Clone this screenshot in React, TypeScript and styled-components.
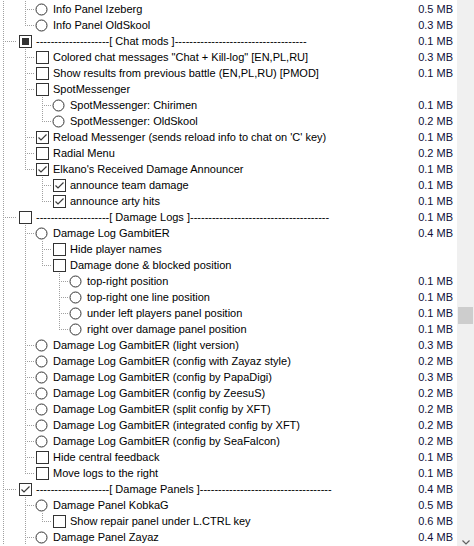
import React from "react";
import styled, { createGlobalStyle } from "styled-components";

type Kind = "radio" | "check";
type State = "on" | "off" | "mixed";

type Item = {
  label: string;
  level: number;
  kind: Kind;
  state?: State;
  size?: string;
};

type GuideKind = "none" | "pipe" | "tee" | "elbow";

const DASHES = (n: number) => "-".repeat(n);

const items: Item[] = [
  { label: "Info Panel Izeberg", level: 1, kind: "radio", size: "0.5 MB" },
  { label: "Info Panel OldSkool", level: 1, kind: "radio", size: "0.3 MB" },
  { label: `${DASHES(20)}[ Chat mods  ]${DASHES(36)}`, level: 0, kind: "check", state: "mixed", size: "0.1 MB" },
  { label: 'Colored chat messages "Chat + Kill-log" [EN,PL,RU]', level: 1, kind: "check", size: "0.3 MB" },
  { label: "Show results from previous battle (EN,PL,RU) [PMOD]", level: 1, kind: "check", size: "0.1 MB" },
  { label: "SpotMessenger", level: 1, kind: "check" },
  { label: "SpotMessenger: Chirimen", level: 2, kind: "radio", size: "0.1 MB" },
  { label: "SpotMessenger: OldSkool", level: 2, kind: "radio", size: "0.2 MB" },
  { label: "Reload Messenger (sends reload info to chat on 'C' key)", level: 1, kind: "check", state: "on", size: "0.1 MB" },
  { label: "Radial Menu", level: 1, kind: "check", size: "0.2 MB" },
  { label: "Elkano's Received Damage Announcer", level: 1, kind: "check", state: "on", size: "0.1 MB" },
  { label: "announce team damage", level: 2, kind: "check", state: "on", size: "0.1 MB" },
  { label: "announce arty hits", level: 2, kind: "check", state: "on", size: "0.1 MB" },
  { label: `${DASHES(20)}[ Damage Logs ]${DASHES(38)}`, level: 0, kind: "check", size: "0.1 MB" },
  { label: "Damage Log GambitER", level: 1, kind: "radio", size: "0.4 MB" },
  { label: "Hide player names", level: 2, kind: "check" },
  { label: "Damage done & blocked position", level: 2, kind: "check" },
  { label: "top-right position", level: 3, kind: "radio", size: "0.1 MB" },
  { label: "top-right one line position", level: 3, kind: "radio", size: "0.1 MB" },
  { label: "under left players panel position", level: 3, kind: "radio", size: "0.1 MB" },
  { label: "right over damage panel position", level: 3, kind: "radio", size: "0.1 MB" },
  { label: "Damage Log GambitER (light version)", level: 1, kind: "radio", size: "0.3 MB" },
  { label: "Damage Log GambitER (config with Zayaz style)", level: 1, kind: "radio", size: "0.2 MB" },
  { label: "Damage Log GambitER (config by PapaDigi)", level: 1, kind: "radio", size: "0.3 MB" },
  { label: "Damage Log GambitER (config by ZeesuS)", level: 1, kind: "radio", size: "0.2 MB" },
  { label: "Damage Log GambitER (split config by XFT)", level: 1, kind: "radio", size: "0.2 MB" },
  { label: "Damage Log GambitER (integrated config by XFT)", level: 1, kind: "radio", size: "0.2 MB" },
  { label: "Damage Log GambitER (config by SeaFalcon)", level: 1, kind: "radio", size: "0.2 MB" },
  { label: "Hide central feedback", level: 1, kind: "check", size: "0.1 MB" },
  { label: "Move logs to the right", level: 1, kind: "check", size: "0.1 MB" },
  { label: `${DASHES(20)}[ Damage Panels ]${DASHES(36)}`, level: 0, kind: "check", state: "on", size: "0.4 MB" },
  { label: "Damage Panel KobkaG", level: 1, kind: "radio", size: "0.5 MB" },
  { label: "Show repair panel under L.CTRL key", level: 2, kind: "check", size: "0.6 MB" },
  { label: "Damage Panel Zayaz", level: 1, kind: "radio", size: "0.4 MB" },
];

// does a sibling at `level` follow row i (the list goes on past the view, so the end counts as yes)
const continues = (i: number, level: number) => {
  for (let j = i + 1; j < items.length; j++) {
    if (items[j].level < level) return false;
    if (items[j].level === level) return true;
  }
  return true;
};

const guidesFor = (i: number): GuideKind[] => {
  const { level } = items[i];
  const out: GuideKind[] = [];
  for (let k = 0; k <= level; k++) {
    const more = continues(i, k);
    if (k === level) out.push(more ? "tee" : "elbow");
    else out.push(more ? "pipe" : "none");
  }
  return out;
};

const GlobalStyle = createGlobalStyle`
  html, body {
    margin: 0;
    padding: 0;
    background: #ffffff;
    overflow: hidden;
  }
  body {
    font-family: Tahoma, "Liberation Sans", Arial, sans-serif;
    font-size: 11px;
    color: #000000;
  }
`;

const Window = styled.div`
  display: flex;
  width: 474px;
  height: 546px;
  overflow: hidden;
  background: #ffffff;
`;

const List = styled.div`
  flex: 1;
  display: flex;
  flex-direction: column;
  padding-top: 1px;
`;

const Row = styled.div`
  display: flex;
  align-items: center;
  height: 16px;
  line-height: 16px;
  white-space: nowrap;
`;

const dots = "#a0a0a0";

const Guide = styled.span<{ $kind: GuideKind; $first: boolean }>`
  position: relative;
  flex: none;
  align-self: stretch;
  width: ${({ $first }) => ($first ? 19 : 17)}px;

  &::before {
    content: "";
    display: ${({ $kind }) => ($kind === "none" ? "none" : "block")};
    position: absolute;
    left: ${({ $first }) => ($first ? 3 : 6)}px;
    top: 0;
    width: 1px;
    height: ${({ $kind }) => ($kind === "elbow" ? 9 : 16)}px;
    background-image: linear-gradient(to bottom, ${dots} 50%, transparent 50%);
    background-size: 1px 2px;
  }

  &::after {
    content: "";
    display: ${({ $kind }) => ($kind === "tee" || $kind === "elbow" ? "block" : "none")};
    position: absolute;
    left: ${({ $first }) => ($first ? 3 : 6)}px;
    right: 2px;
    top: 8px;
    height: 1px;
    background-image: linear-gradient(to right, ${dots} 50%, transparent 50%);
    background-size: 2px 1px;
  }
`;

const Box = styled.span<{ $state: State }>`
  flex: none;
  box-sizing: border-box;
  display: flex;
  align-items: center;
  justify-content: center;
  width: 13px;
  height: 13px;
  border: 1px solid #333333;
  background: #ffffff;

  &::after {
    content: "";
    display: ${({ $state }) => ($state === "mixed" ? "block" : "none")};
    width: 7px;
    height: 7px;
    background: #333333;
  }
`;

const Tick = styled.svg`
  display: block;
  width: 11px;
  height: 11px;
`;

const Radio = styled.svg`
  flex: none;
  display: block;
  width: 13px;
  height: 13px;
  margin-left: -1px;
  margin-right: 1px;
`;

const Label = styled.span`
  margin-left: 4px;
  color: #000000;
`;

const Size = styled.span`
  margin-left: auto;
  padding-right: 4px;
  color: #10103a;
`;

const ScrollBar = styled.div`
  flex: none;
  width: 17px;
  display: flex;
  flex-direction: column;
  background: #f0f0f0;
`;

const Track = styled.div`
  flex: 1;
  display: flex;
  flex-direction: column;
`;

const Thumb = styled.div`
  margin: 307px 1px 0 1px;
  height: 17px;
  background: #cdcdcd;
`;

const ArrowButton = styled.div`
  flex: none;
  height: 17px;
  margin-bottom: -5px;
  display: flex;
  align-items: center;
  justify-content: center;
`;

const Control = ({ item }: { item: Item }) => {
  if (item.kind === "radio") {
    return (
      <Radio viewBox="0 0 13 13">
        <circle cx="6.5" cy="6.5" r="5.5" fill="#ffffff" stroke="#333333" strokeWidth="1" />
      </Radio>
    );
  }
  const state = item.state ?? "off";
  return (
    <Box $state={state}>
      {state === "on" ? (
        <Tick viewBox="0 0 11 11">
          <polyline points="1.5,5.5 4,8 9.5,2.5" fill="none" stroke="#3c3c3c" strokeWidth="1.2" />
        </Tick>
      ) : null}
    </Box>
  );
};

const App = () => {
  return (
    <>
      <GlobalStyle />
      <Window>
        <List>
          {items.map((item, i) => (
            <Row key={i}>
              {guidesFor(i).map((g, k) => (
                <Guide key={k} $kind={g} $first={k === 0} />
              ))}
              <Control item={item} />
              <Label>{item.label}</Label>
              {item.size ? <Size>{item.size}</Size> : null}
            </Row>
          ))}
        </List>
        <ScrollBar>
          <Track>
            <Thumb />
          </Track>
          <ArrowButton>
            <svg width="8" height="5" viewBox="0 0 8 5">
              <polyline points="0.5,0.5 4,4 7.5,0.5" fill="none" stroke="#606060" strokeWidth="1.2" />
            </svg>
          </ArrowButton>
        </ScrollBar>
      </Window>
    </>
  );
};

export default App;
